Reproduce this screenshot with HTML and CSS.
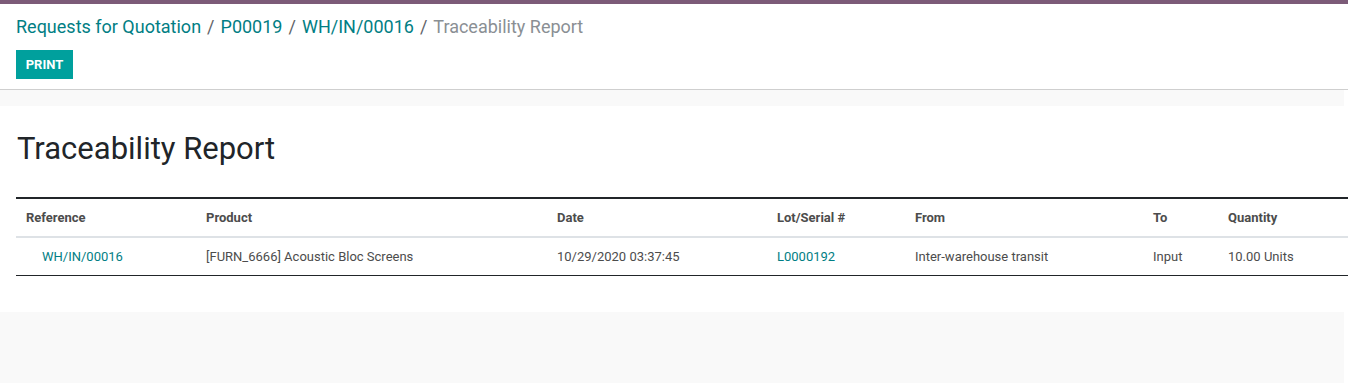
FILE: index.html
```html
<!DOCTYPE html>
<html>
<head>
<meta charset="utf-8">
<link rel="stylesheet" href="styles.css">
</head>
<body>
<div class="topbar"></div>
<div class="control-panel">
  <ol class="breadcrumb">
    <li><a href="#">Requests for Quotation</a></li>
    <li class="sep">/</li>
    <li><a href="#">P00019</a></li>
    <li class="sep">/</li>
    <li><a href="#">WH/IN/00016</a></li>
    <li class="sep">/</li>
    <li class="active">Traceability Report</li>
  </ol>
  <div class="buttons">
    <button class="btn-print">PRINT</button>
  </div>
</div>
<div class="content">
  <div class="sheet">
    <h1 class="title">Traceability Report</h1>
    <table class="report">
      <colgroup>
        <col class="c-ref"><col class="c-prod"><col class="c-date"><col class="c-lot"><col class="c-from"><col class="c-to"><col class="c-qty">
      </colgroup>
      <thead>
        <tr>
          <th>Reference</th>
          <th>Product</th>
          <th>Date</th>
          <th>Lot/Serial #</th>
          <th>From</th>
          <th>To</th>
          <th>Quantity</th>
        </tr>
      </thead>
      <tbody>
        <tr>
          <td class="ref"><a href="#">WH/IN/00016</a></td>
          <td>[FURN_6666] Acoustic Bloc Screens</td>
          <td>10/29/2020 03:37:45</td>
          <td><a href="#">L0000192</a></td>
          <td>Inter-warehouse transit</td>
          <td>Input</td>
          <td>10.00 Units</td>
        </tr>
      </tbody>
    </table>
  </div>
</div>
</body>
</html>
```
FILE: styles.css
```css
html, body {
  margin: 0;
  padding: 0;
  height: 100%;
  background: #ffffff;
}
body {
  font-family: Roboto, "Liberation Sans", sans-serif;
  display: flex;
  flex-direction: column;
}
a {
  color: #017e84;
  text-decoration: none;
}
.topbar {
  height: 4px;
  background: #7c5b78;
  flex: none;
}
.control-panel {
  flex: none;
  padding: 11px 16px 10px 16px;
  border-bottom: 1px solid #cfcfcf;
  height: 64px;
  box-sizing: content-box;
}
.breadcrumb {
  list-style: none;
  margin: 0;
  padding: 0;
  display: flex;
  align-items: center;
  font-size: 18px;
  line-height: 24px;
}
.breadcrumb .sep {
  color: #5f6368;
  padding: 0 6px 0 6px;
}
.breadcrumb .active {
  color: #8a8f94;
}
.buttons {
  margin-top: 11px;
  display: flex;
}
.btn-print {
  background: #00a09d;
  color: #ffffff;
  border: none;
  font-family: Roboto, "Liberation Sans", sans-serif;
  font-weight: bold;
  font-size: 13px;
  width: 57px;
  height: 29px;
  padding: 0;
}
.content {
  flex: 1;
  background: #f9f9f9;
  padding-top: 16px;
  margin-right: 4px;
}
.sheet {
  background: #ffffff;
  height: 206px;
  padding-left: 16px;
  margin-right: -4px;
  overflow: hidden;
  box-sizing: border-box;
  padding-top: 25px;
}
.title {
  margin: 0;
  font-weight: 400;
  font-size: 31px;
  line-height: 36px;
  color: #212529;
  padding-left: 1px;
}
.report {
  margin-top: 30px;
  width: 1332px;
  border-collapse: collapse;
  table-layout: fixed;
  font-size: 13px;
  color: #4c4c4c;
  border-top: 2px solid #212529;
  border-bottom: 1px solid #212529;
}
.c-ref { width: 180px; }
.c-prod { width: 351px; }
.c-date { width: 220px; }
.c-lot { width: 138px; }
.c-from { width: 238px; }
.c-to { width: 75px; }
.c-qty { width: 130px; }
.report th {
  text-align: left;
  font-weight: bold;
  color: #4c4c4c;
  padding: 0 10px;
  height: 37px;
  border-bottom: 2px solid #dee2e6;
}
.report td {
  padding: 0 10px;
  height: 37px;
  white-space: nowrap;
}
.report td.ref {
  padding-left: 26px;
}
```
